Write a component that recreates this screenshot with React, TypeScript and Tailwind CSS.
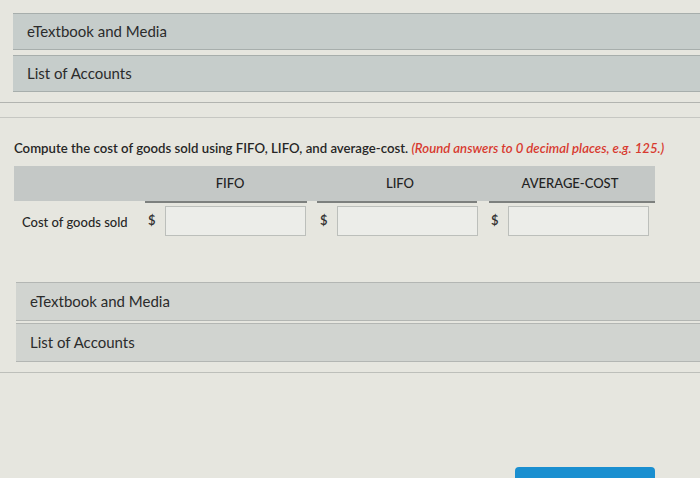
import React from 'react'

const lato = { fontFamily: 'Lato, "Open Sans", sans-serif' }

function Bar({ label, tone }: { label: string; tone: 'top' | 'bottom' }) {
  return (
    <div
      className={
        tone === 'top'
          ? 'h-[37px] flex items-center pl-[14px] bg-[#c6cdcb] border-y border-[#a7aeac] text-[15px] text-[#2b2b2b]'
          : 'h-[39px] flex items-center pl-[14px] bg-[#d1d4d0] border-y border-[#b3b6b3] text-[15px] text-[#2b2b2b]'
      }
    >
      {label}
    </div>
  )
}

function MoneyInput() {
  return (
    <div className="flex items-center gap-[9px]">
      <span className="text-[13px] font-semibold text-[#333]">$</span>
      <div className="h-[30px] w-[141px] bg-[#ecede9] border border-[#bcbfbb]" />
    </div>
  )
}

export default function App() {
  return (
    <div className="w-[700px] h-[478px] overflow-hidden bg-[#e6e6df] relative" style={lato}>
      {/* top links */}
      <div className="pt-[13px] pl-[13px] flex flex-col gap-[5px]">
        <Bar label="eTextbook and Media" tone="top" />
        <Bar label="List of Accounts" tone="top" />
      </div>
      <div className="mt-[10px] border-t border-[#b2b4b0]" />
      <div className="mt-[14px] border-t border-[#c6c7c2]" />

      {/* question */}
      <p className="mt-[21px] pl-[14px] text-[13.2px] font-semibold text-[#262626] whitespace-nowrap">
        Compute the cost of goods sold using FIFO, LIFO, and average-cost.{' '}
        <span className="text-[#d83a2f] italic">(Round answers to 0 decimal places, e.g. 125.)</span>
      </p>

      {/* table */}
      <div className="mt-[7px] ml-[14px] w-[641px]">
        <div className="grid grid-cols-[131px_170px_170px_170px] h-[35px] bg-[#c4c8c6] items-center text-[13px] font-medium text-[#222]">
          <div />
          <div className="text-center">FIFO</div>
          <div className="text-center">LIFO</div>
          <div className="text-center">AVERAGE-COST</div>
        </div>
        <div className="grid grid-cols-[131px_170px_170px_170px] h-[2px]">
          <div />
          <div className="bg-[#7d807e] mr-[8px]" />
          <div className="bg-[#7d807e] mr-[8px] ml-[2px]" />
          <div className="bg-[#7d807e] ml-[4px]" />
        </div>
        <div className="grid grid-cols-[131px_170px_170px_170px] items-center mt-[2px] h-[32px]">
          <div className="pl-[8px] pt-[3px] text-[13px] font-medium text-[#262626]">Cost of goods sold</div>
          <div className="pl-[3px]">
            <MoneyInput />
          </div>
          <div className="pl-[5px]">
            <MoneyInput />
          </div>
          <div className="pl-[6px]">
            <MoneyInput />
          </div>
        </div>
      </div>

      {/* bottom links */}
      <div className="mt-[45px] pl-[16px] flex flex-col gap-[2px]">
        <Bar label="eTextbook and Media" tone="bottom" />
        <Bar label="List of Accounts" tone="bottom" />
      </div>
      <div className="mt-[10px] border-t border-[#bdbfba]" />

      {/* submit button peeking at bottom */}
      <div className="absolute left-[515px] bottom-0 w-[140px] h-[11px] rounded-t-[4px] bg-[#1a8fd0]" />
    </div>
  )
}
